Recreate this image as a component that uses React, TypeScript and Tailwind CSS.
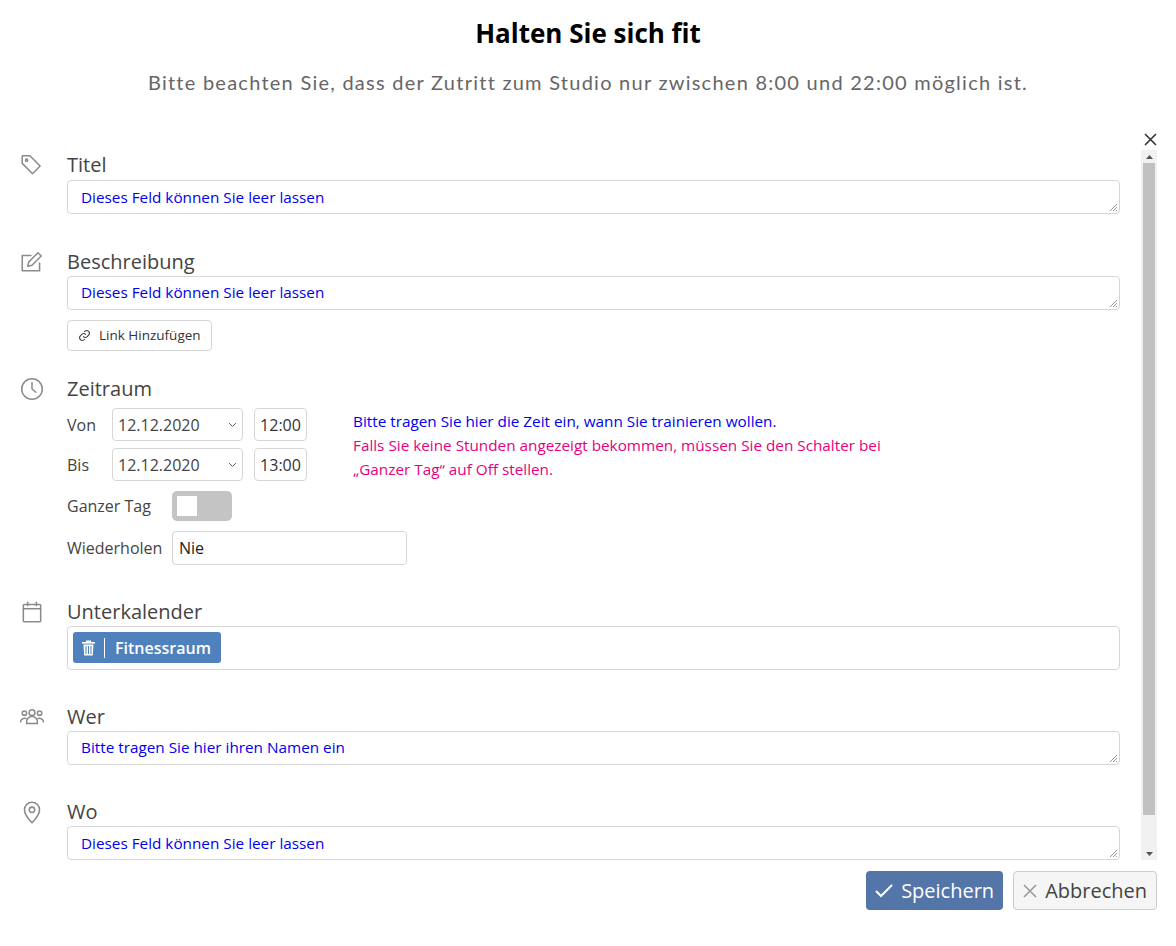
import React from 'react';

const font = { fontFamily: '"Open Sans", "Noto Sans", sans-serif' };

function Icon({ children }: { children: React.ReactNode }) {
  return (
    <svg width="26" height="26" viewBox="0 0 24 24" fill="none" stroke="#8a8a8a" strokeWidth="1.4" strokeLinecap="round" strokeLinejoin="round">
      {children}
    </svg>
  );
}

function Section({ icon, label, children }: { icon: React.ReactNode; label: string; children: React.ReactNode }) {
  return (
    <div className="flex">
      <div className="w-[67px] pl-[19px] pt-[1px]">{icon}</div>
      <div className="flex-1 pr-[21px]">
        <div className="text-[20px] leading-[28px] text-[#444]">{label}</div>
        {children}
      </div>
    </div>
  );
}

function Field({ text }: { text: string }) {
  return (
    <div className="relative h-[34px] rounded border border-[#d6d6d6] px-[13px] flex items-center text-[15.3px] text-[#0000ee]">
      {text}
      <svg className="absolute right-[1px] bottom-[1px]" width="9" height="9" viewBox="0 0 9 9" stroke="#999" strokeWidth="1">
        <path d="M1 8 L8 1 M4 8 L8 4 M7 8 L8 7" />
      </svg>
    </div>
  );
}

export default function App() {
  return (
    <div className="w-[1176px] h-[946px] bg-white relative" style={font}>
      <div className="text-center pt-[15px] text-[26px] font-bold text-black leading-[36px]">Halten Sie sich fit</div>
      <div className="text-center mt-[17px] text-[20px] text-[#666] leading-[28px]" style={{ fontFamily: 'Lato, "Open Sans", sans-serif', letterSpacing: '1.25px' }}>
        Bitte beachten Sie, dass der Zutritt zum Studio nur zwischen 8:00 und 22:00 möglich ist.
      </div>
      <svg className="absolute left-[1144px] top-[133px]" width="13" height="13" viewBox="0 0 13 13" stroke="#333" strokeWidth="1.6"><path d="M1 1 L12 12 M12 1 L1 12" /></svg>

      <div className="flex mt-[54px] h-[710px]">
        <div className="flex-1 overflow-hidden pt-[1px] flex flex-col">
          <Section label="Titel" icon={<Icon><path d="M3 4v6.5l9.5 9.5 7-7L10 3.5H3.5z" /><circle cx="7" cy="7.5" r="1" /></Icon>}>
            <div className="mt-[1px]"><Field text="Dieses Feld können Sie leer lassen" /></div>
          </Section>
          <div className="h-[46px]" />
          <Section label="Beschreibung" icon={<Icon><path d="M19 13v7H3V6h8" /><path d="M17.5 3.5l3 3L12 15l-4 1 1-4z" /></Icon>}>
            <Field text="Dieses Feld können Sie leer lassen" />
            <div className="mt-[10px] inline-flex items-center gap-[8px] h-[31px] px-[10px] rounded border border-[#d6d6d6] text-[13.5px] text-[#333]">
              <svg width="13" height="13" viewBox="0 0 24 24" fill="none" stroke="#444" strokeWidth="2" strokeLinecap="round"><path d="M10 14a5 5 0 007 0l3-3a5 5 0 00-7-7l-1 1" /><path d="M14 10a5 5 0 00-7 0l-3 3a5 5 0 007 7l1-1" /></svg>
              Link Hinzufügen
            </div>
          </Section>
          <div className="h-[33px]" />
          <Section label="Zeitraum" icon={<Icon><circle cx="12" cy="12" r="9.5" /><path d="M12 6v6l3.5 3" /></Icon>}>
            <div className="flex mt-[5px]">
              <div className="flex flex-col gap-[7px]">
                {[['Von', '12:00'], ['Bis', '13:00']].map(([l, t]) => (
                  <div key={l} className="flex items-center">
                    <div className="w-[45px] text-[16px] text-[#444]">{l}</div>
                    <div className="w-[131px] h-[33px] rounded border border-[#d6d6d6] flex items-center justify-between px-[5px] text-[16px] text-[#444]">
                      12.12.2020
                      <svg width="9" height="6" viewBox="0 0 9 6" fill="none" stroke="#666" strokeWidth="1"><path d="M1 1 L4.5 4.5 L8 1" /></svg>
                    </div>
                    <div className="ml-[11px] w-[53px] h-[33px] rounded border border-[#d6d6d6] flex items-center justify-center text-[16px] text-[#333]">{t}</div>
                  </div>
                ))}
              </div>
              <div className="ml-[46px] mt-[1px] text-[15.3px] leading-[24px]">
                <div className="text-[#0000ee]">Bitte tragen Sie hier die Zeit ein, wann Sie trainieren wollen.</div>
                <div className="text-[#e6007e]">Falls Sie keine Stunden angezeigt bekommen, müssen Sie den Schalter bei</div>
                <div className="text-[#e6007e]">„Ganzer Tag“ auf Off stellen.</div>
              </div>
            </div>
            <div className="flex items-center mt-[10px]">
              <div className="w-[105px] text-[16px] text-[#444]">Ganzer Tag</div>
              <div className="w-[60px] h-[30px] rounded-[5px] bg-[#c4c4c4] p-[5px]"><div className="w-[20px] h-[20px] bg-white" /></div>
            </div>
            <div className="flex items-center mt-[10px]">
              <div className="w-[105px] text-[16px] text-[#444]">Wiederholen</div>
              <div className="w-[235px] h-[34px] rounded border border-[#d6d6d6] flex items-center px-[6px] text-[16px] text-[#222]">Nie</div>
            </div>
          </Section>
          <div className="h-[44px]" />
          <Section label="Unterkalender" icon={<Icon><rect x="4" y="5" width="16" height="16" rx="1" /><path d="M4 9h16M8 3v3M16 3v3" /></Icon>}>
            <div className="h-[44px] rounded border border-[#d6d6d6] flex items-center px-[5px]">
              <div className="h-[31px] rounded-[3px] bg-[#4f81bd] flex items-center text-white text-[16px] font-semibold">
                <svg className="mx-[8px]" width="15" height="16" viewBox="0 0 15 16" fill="white"><rect x="1" y="2" width="13" height="1.6" /><rect x="5" y="0.5" width="5" height="1.6" /><path d="M2.5 4.5h10l-0.7 11H3.2z" /><path d="M5 6v8M7.5 6v8M10 6v8" stroke="#4f81bd" strokeWidth="1" /></svg>
                <div className="w-px h-[20px] bg-white" />
                <span className="px-[10px]">Fitnessraum</span>
              </div>
            </div>
          </Section>
          <div className="h-[45px]" />
          <Section label="Wer" icon={<Icon><circle cx="12" cy="8" r="2.7" /><circle cx="5" cy="8.5" r="2" /><circle cx="19" cy="8.5" r="2" /><path d="M7 18v-1.5a5 5 0 0110 0V18z" /><path d="M1.5 16.5a3.5 3.5 0 015-3M22.5 16.5a3.5 3.5 0 00-5-3" /></Icon>}>
            <Field text="Bitte tragen Sie hier ihren Namen ein" />
          </Section>
          <div className="h-[45px]" />
          <Section label="Wo" icon={<Icon><path d="M12 22s7-7 7-12a7 7 0 00-14 0c0 5 7 12 7 12z" /><circle cx="12" cy="10" r="2.5" /></Icon>}>
            <Field text="Dieses Feld können Sie leer lassen" />
          </Section>
        </div>
        <div className="w-[16px] mr-[19px] bg-[#f1f1f1] flex flex-col items-center">
          <div className="h-[13px] flex items-center"><svg width="7" height="4" viewBox="0 0 7 4" fill="#555"><path d="M0 4L3.5 0 7 4z" /></svg></div>
          <div className="w-[12px] h-[652px] bg-[#c1c1c1]" />
          <div className="flex-1" />
          <div className="h-[13px] flex items-center"><svg width="7" height="4" viewBox="0 0 7 4" fill="#555"><path d="M0 0L3.5 4 7 0z" /></svg></div>
        </div>
      </div>

      <div className="flex justify-end gap-[10px] mr-[19px] mt-[11px]">
        <div className="h-[39px] px-[9px] rounded bg-[#5475a8] text-white text-[20px] flex items-center gap-[8px]">
          <svg width="18" height="14" viewBox="0 0 18 14" fill="none" stroke="white" strokeWidth="2"><path d="M1 7l5 5L17 1" /></svg>
          Speichern
        </div>
        <div className="h-[39px] px-[9px] rounded border border-[#ccc] bg-[#f5f5f5] text-[#444] text-[20px] flex items-center gap-[8px]">
          <svg width="14" height="14" viewBox="0 0 14 14" stroke="#999" strokeWidth="1.6"><path d="M1 1l12 12M13 1L1 13" /></svg>
          Abbrechen
        </div>
      </div>
    </div>
  );
}
